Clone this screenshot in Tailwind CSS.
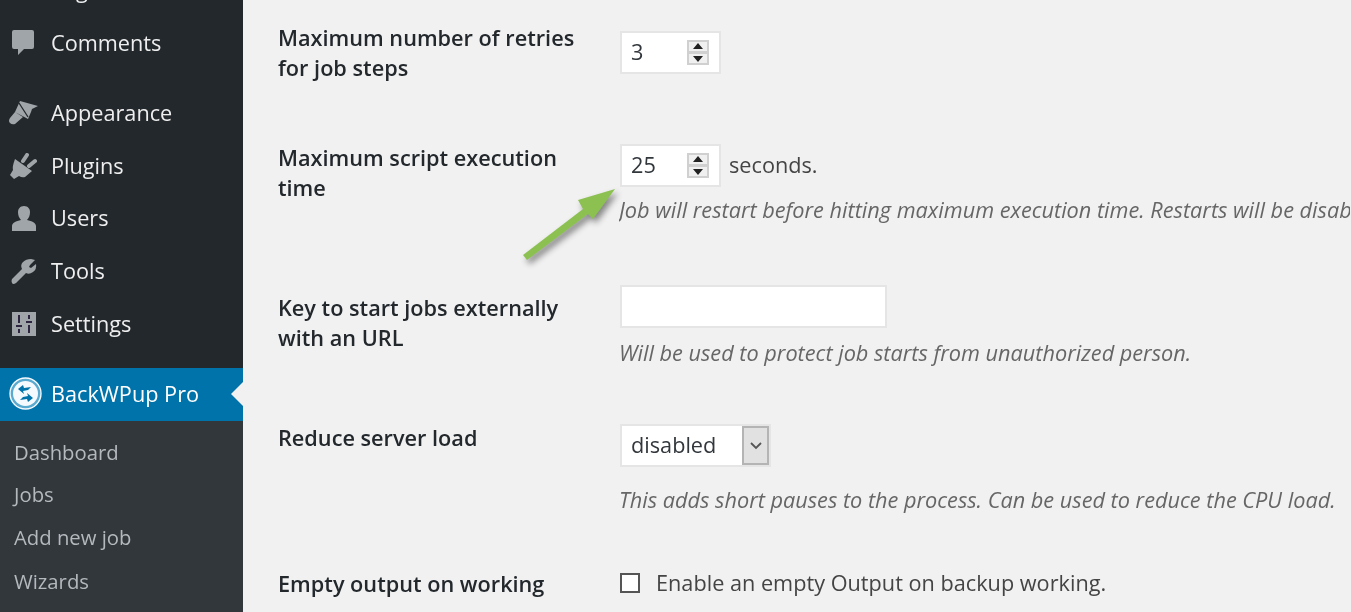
<!DOCTYPE html>
<html>
<head>
<meta charset="utf-8">
<script src="https://cdn.jsdelivr.net/npm/@tailwindcss/browser@4"></script>
</head>
<body class="m-0">
<div class="relative flex w-[1351px] h-[612px] overflow-hidden bg-[#f1f1f1] font-['Open_Sans',sans-serif] text-[#444] blur-[0.35px]">
  <aside class="w-[243px] h-[612px] shrink-0 bg-[#23282d] flex flex-col text-[#eee] text-[21.7px]">
    <div class="mt-[-36px] h-[52.5px] flex items-center">
      <svg class="ml-[11px] w-[18px] h-[26px] fill-[#a0a5aa]" viewBox="0 0 18 26"><path d="M0 2h18v20H0z"/></svg>
      <span class="ml-[22px]">Pages</span>
    </div>
    <div class="h-[53px] flex items-center">
      <svg class="ml-[11px] w-[24px] h-[26px] fill-[#a0a5aa]" viewBox="0 0 24 26"><path d="M3 0h18q2 0 2 2v15q0 2-2 2h-8l-6 6v-6H3q-2 0-2-2V2q0-2 2-2z"/></svg>
      <span class="ml-[16px]">Comments</span>
    </div>
    <div class="mt-[17px] h-[53px] flex items-center">
      <svg class="ml-[9px] w-[30px] h-[28px]" viewBox="0 0 30 28"><path fill="#a0a5aa" d="M11 2l18 5-6 3-1 3-3 7-13-7zM6 13l8 5-8 7q-3 1-5-1t0-5z"/><path fill="none" stroke="#23282d" stroke-width="1.3" d="M10 4l9 14"/></svg>
      <span class="ml-[12px]">Appearance</span>
    </div>
    <div class="h-[53px] flex items-center">
      <svg class="ml-[10px] w-[27px] h-[27px]" viewBox="0 0 27 27"><path fill="#a0a5aa" d="M5 6l17 12-7 6q-3 1-6-1l-5 3-4-4 3-5q-1-3 2-11z"/><path fill="none" stroke="#a0a5aa" stroke-width="4" stroke-linecap="round" d="M13 8l4-6M19 13l6-5"/></svg>
      <span class="ml-[14px]">Plugins</span>
    </div>
    <div class="h-[52px] flex items-center">
      <svg class="ml-[11px] w-[26px] h-[27px] fill-[#a0a5aa]" viewBox="0 0 26 27"><path d="M13 1c4 0 6 3 6 6s-1 6-3 8c5 1 9 3 9 6v5H1v-5c0-3 4-5 9-6-2-2-3-5-3-8s2-6 6-6z"/></svg>
      <span class="ml-[14px]">Users</span>
    </div>
    <div class="h-[53px] flex items-center">
      <svg class="ml-[10px] w-[27px] h-[27px] fill-[#a0a5aa]" viewBox="0 0 27 27"><path d="M25 2l-5 5-1 2 2 1 5-4q1 5-3 8t-7 1L6 25q-3 2-4 0t0-4l10-10q-2-4 1-7t8-3z"/></svg>
      <span class="ml-[14px]">Tools</span>
    </div>
    <div class="h-[53px] flex items-center">
      <svg class="ml-[12px] w-[24px] h-[24px]" viewBox="0 0 24 24"><path fill="#a0a5aa" d="M0 0h24v24H0z"/><path fill="none" stroke="#2e2640" stroke-width="2" d="M7 3v8M7 17v4M17 3v4M17 13v8M4 14h6M14 10h6"/></svg>
      <span class="ml-[15px]">Settings</span>
    </div>
    <div class="relative mt-[17px] h-[53px] bg-[#0073aa] flex items-center text-white">
      <svg class="ml-[9px] w-[33px] h-[33px] mt-[-2px]" viewBox="0 0 33 33"><circle cx="16.5" cy="16.5" r="15.5" fill="#5aa9cf" stroke="#f4fafd" stroke-width="1.4"/><circle cx="16.5" cy="16.5" r="12.5" fill="#f4fafd"/><path d="M9 12l5-4 1 3 7-1-3 3-5 1 1 3zM24 21l-5 4-1-3-7 1 3-3 5-1-1-3z" fill="#0073aa"/></svg>
      <span class="ml-[9px]">BackWPup Pro</span>
      <div class="absolute right-0 top-[14px] w-0 h-0 border-y-[12px] border-y-transparent border-r-[12px] border-r-[#f1f1f1]"></div>
    </div>
    <div class="flex-1 bg-[#32373c] pt-[11px] pl-[14px] text-[#b4b9be] text-[20.3px]">
      <div class="h-[42px] flex items-center">Dashboard</div>
      <div class="h-[42px] flex items-center">Jobs</div>
      <div class="h-[43px] flex items-center">Add new job</div>
      <div class="h-[44px] flex items-center pt-[1px]">Wizards</div>
    </div>
  </aside>

  <main class="flex-1 pl-[35px] flex flex-col text-[21.7px]">
    <div class="h-[113px] pt-[23px] flex shrink-0">
      <div class="w-[342px] font-semibold leading-[30px] text-[#23282d]">Maximum number of retries<br>for job steps</div>
      <div class="mt-[8px] w-[101px] h-[43px] bg-white border-2 border-[#e5e5e5] flex items-center justify-between pl-[9px] pr-[10px] text-[#32373c]">3
        <svg class="w-[22px] h-[25px]" viewBox="0 0 22 25"><path fill="#d0d0d0" d="M0 0h22v25H0z"/><path fill="#f0f0f0" d="M2 2h18v9H2zM2 14h18v9H2z"/><path fill="#222" d="M11 3l5 6H6zM11 22l-5-6h10z"/></svg>
      </div>
    </div>
    <div class="h-[141px] pt-[30px] flex shrink-0">
      <div class="w-[342px] font-semibold leading-[30px] text-[#23282d]">Maximum script execution<br>time</div>
      <div class="mt-[1px] whitespace-nowrap">
        <div class="flex items-center">
          <div class="w-[101px] h-[43px] bg-white border-2 border-[#e5e5e5] flex items-center justify-between pl-[9px] pr-[10px] text-[#32373c]">25
            <svg class="w-[22px] h-[25px]" viewBox="0 0 22 25"><path fill="#d0d0d0" d="M0 0h22v25H0z"/><path fill="#f0f0f0" d="M2 2h18v9H2zM2 14h18v9H2z"/><path fill="#222" d="M11 3l5 6H6zM11 22l-5-6h10z"/></svg>
          </div>
          <span class="ml-[8px]">seconds.</span>
        </div>
        <div class="mt-[7px] ml-[-1px] italic text-[#666] w-[731px] overflow-hidden">Job will restart before hitting maximum execution time. Restarts will be disabled on CLI usage.</div>
      </div>
    </div>
    <div class="h-[139px] pt-[39px] flex shrink-0">
      <div class="w-[342px] font-semibold leading-[30px] text-[#23282d]">Key to start jobs externally<br>with an URL</div>
      <div class="mt-[-8px]">
        <div class="w-[267px] h-[43px] bg-white border-2 border-[#e5e5e5]"></div>
        <div class="mt-[9px] ml-[-1px] italic text-[#666] whitespace-nowrap">Will be used to protect job starts from unauthorized person.</div>
      </div>
    </div>
    <div class="h-[149px] pt-[30px] flex shrink-0">
      <div class="w-[342px] font-semibold leading-[30px] text-[#23282d]">Reduce server load</div>
      <div class="mt-[1px]">
        <div class="w-[151px] h-[43px] bg-white border-2 border-[#e5e5e5] flex items-center pl-[9px] text-[#32373c] relative">disabled
          <div class="absolute right-0 top-0 w-[27px] h-[39px] bg-[#e1e1e1] border-2 border-[#b4b4b4] flex items-center justify-center">
            <svg class="w-[14px] h-[9px]" viewBox="0 0 14 9"><path d="M2 2l5 5 5-5" fill="none" stroke="#555" stroke-width="1.8"/></svg>
          </div>
        </div>
        <div class="mt-[17px] ml-[-1px] italic text-[#666] whitespace-nowrap">This adds short pauses to the process. Can be used to reduce the CPU load.</div>
      </div>
    </div>
    <div class="flex pt-[27px]">
      <div class="w-[342px] font-semibold leading-[30px] text-[#23282d]">Empty output on working</div>
      <div class="flex items-center h-[30px] mt-[-1px]">
        <div class="w-[20px] h-[20px] bg-white border-2 border-[#555]"></div>
        <span class="ml-[16px]">Enable an empty Output on backup working.</span>
      </div>
    </div>
  </main>

  <svg class="absolute left-[515px] top-[180px] w-[110px] h-[90px]" style="filter:drop-shadow(3px 4px 3px rgba(0,0,0,.45))" viewBox="0 0 110 90"><path fill="#8cc152" d="M100 9L63 20l5 9-60 46 4 5 61-46 5 5z"/></svg>
</div>
</body>
</html>
